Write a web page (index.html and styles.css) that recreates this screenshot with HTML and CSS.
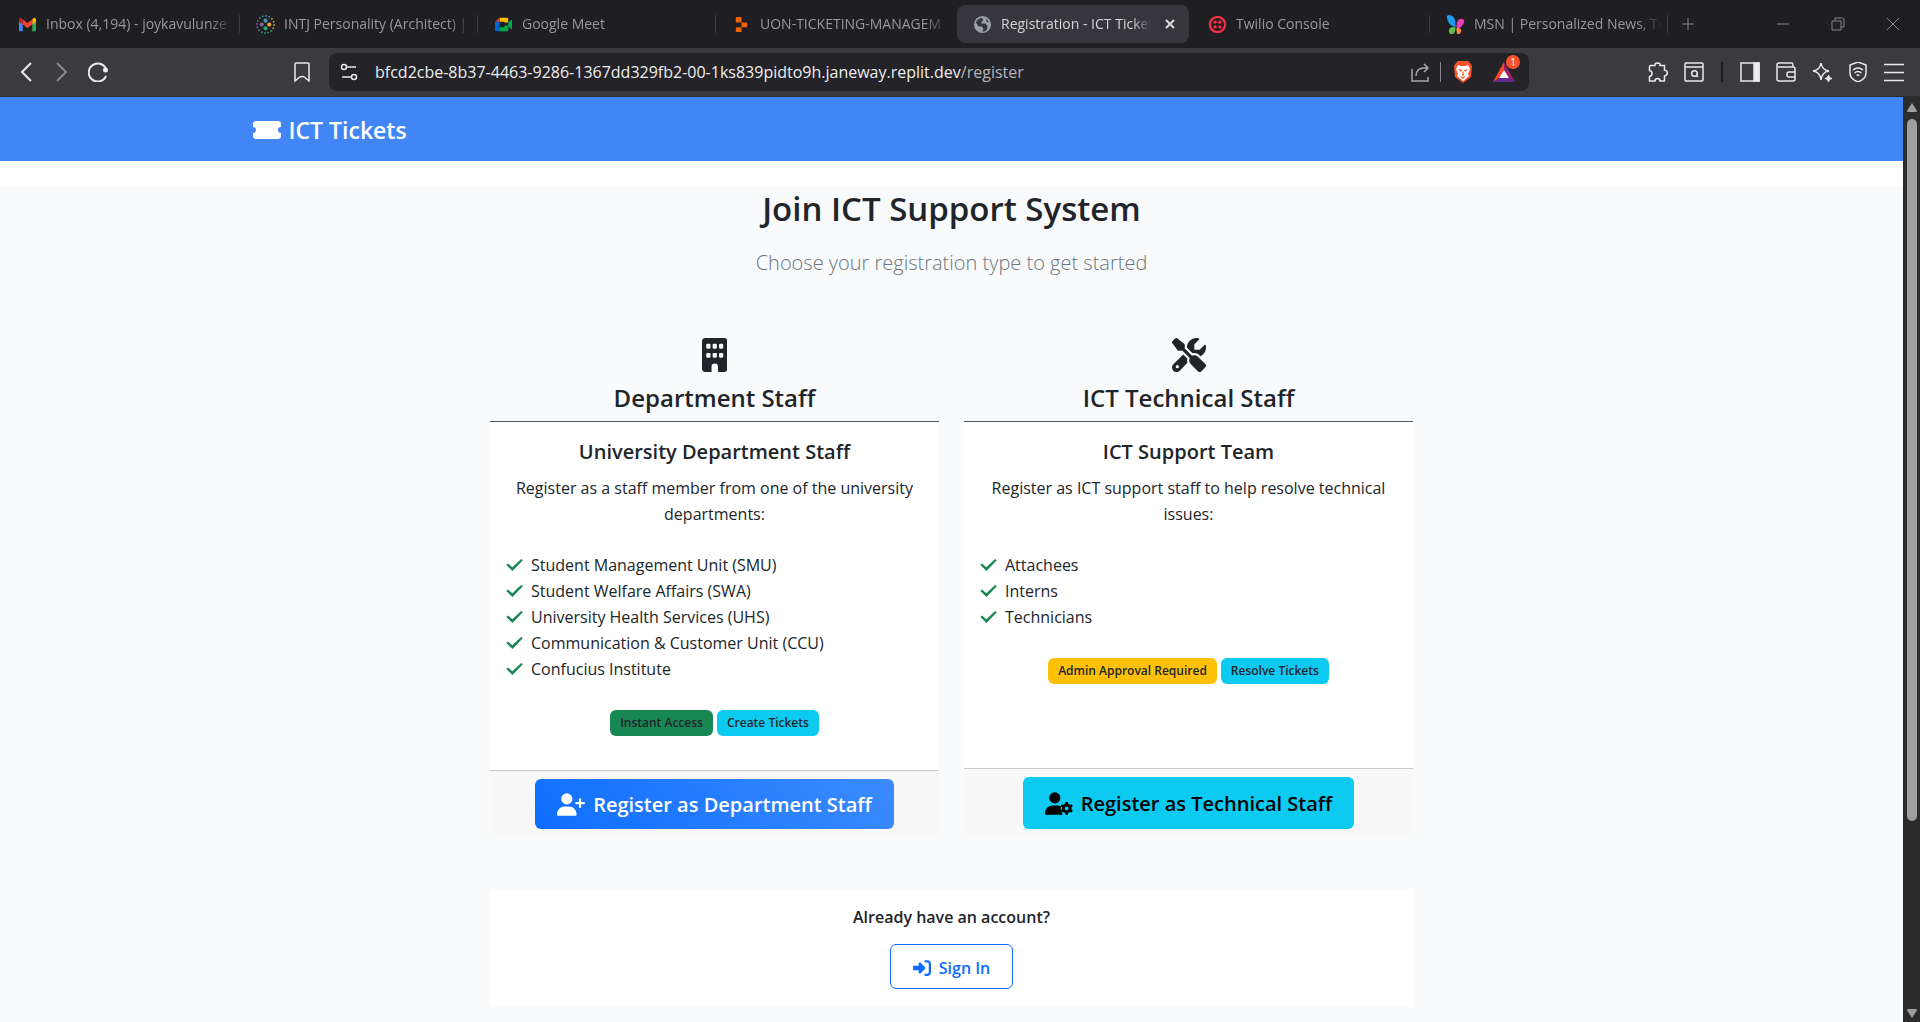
FILE: index.html
```html
<!DOCTYPE html>
<html lang="en">
<head>
<meta charset="utf-8">
<title>Registration - ICT Tickets</title>
<link rel="stylesheet" href="styles.css">
</head>
<body>
<header class="browser">
  <nav class="tabs" aria-label="Browser tabs">
    <a class="tab" href="#"><svg class="fav" viewBox="0 0 20 20"><path fill="#4285f4" d="M1 5v11q0 1 1 1h3V9z"/><path fill="#34a853" d="M19 5v11q0 1-1 1h-3V9z"/><path fill="#c5221f" d="M1 5q0-2 2-2l2 1.500V10L1 7z"/><path fill="#fbbc04" d="M19 5q0-2-2-2l-2 1.500V10l4-3z"/><path fill="#ea4335" d="M5 4.500l5 4 5-4V10l-5 4-5-4z"/></svg><span class="tab-text">Inbox (4,194) - joykavulunze</span></a>
    <a class="tab" href="#"><svg class="fav" viewBox="0 0 20 20"><g fill="none" stroke-width="1.600"><path stroke="#4298b4" stroke-dasharray="1.600 1.800" d="M3.600 3.600a9 9 0 0 1 12.800 0"/><path stroke="#e4ae3a" stroke-dasharray="1.600 1.800" d="M16.400 3.600a9 9 0 0 1 0 12.800"/><path stroke="#33a474" stroke-dasharray="1.600 1.800" d="M16.400 16.400a9 9 0 0 1-12.800 0"/><path stroke="#88619a" stroke-dasharray="1.600 1.800" d="M3.600 16.400a9 9 0 0 1 0-12.800"/></g><circle cx="10" cy="6" r="2.200" fill="#4298b4"/><circle cx="14" cy="10" r="2.200" fill="#e4ae3a"/><circle cx="10" cy="14" r="2.200" fill="#33a474"/><circle cx="6" cy="10" r="2.200" fill="#88619a"/></svg><span class="tab-text">INTJ Personality (Architect) |</span></a>
    <a class="tab" href="#"><svg class="fav" viewBox="0 0 20 20"><path fill="#ffba00" d="M6 3h8q1 0 1 1v4h-4V7H6z"/><path fill="#ea4335" d="M6 3v4H1z"/><path fill="#0066da" d="M1 7h5v6H1z"/><path fill="#0066da" d="M1 13h5v4H2q-1 0-1-1z"/><path fill="#00ac47" d="M6 13h5v-2h4v5q0 1-1 1H6zM15 8l3.500-3q.5 0 .5 1v9q0 1-.5 0L15 12z"/></svg><span class="tab-text">Google Meet</span></a>
    <a class="tab" href="#"><svg class="fav" viewBox="0 0 20 20"><path fill="#f26207" d="M4 3q0-1 1-1h5v6H5q-1 0-1-1zM10 8h5q1 0 1 1v3q0 1-1 1h-5zM4 14q0-1 1-1h5v4q0 1-1 1H5q-1 0-1-1z"/></svg><span class="tab-text">UON-TICKETING-MANAGEM</span></a>
    <a class="tab active" href="#"><svg class="fav" viewBox="0 0 20 20"><circle cx="10" cy="10" r="9" fill="#9aa0a6"/><path fill="#37363c" d="M3 8q2-4 6-5l2 2-2 2v2h4l2 2q1 3-1 5-2 2-4 1l1-3-2-2H6zM14 4l3 4-3-1z"/></svg><span class="tab-text">Registration - ICT Ticket</span><svg class="close" viewBox="0 0 12 12"><path d="M2 2l8 8M10 2l-8 8"/></svg></a>
    <a class="tab" href="#"><svg class="fav" viewBox="0 0 20 20"><circle cx="10" cy="10" r="8" fill="none" stroke="#f22f46" stroke-width="2.500"/><g fill="#f22f46"><circle cx="7.500" cy="7.500" r="1.800"/><circle cx="12.500" cy="7.500" r="1.800"/><circle cx="7.500" cy="12.500" r="1.800"/><circle cx="12.500" cy="12.500" r="1.800"/></g></svg><span class="tab-text">Twilio Console</span></a>
    <a class="tab" href="#"><svg class="fav" viewBox="0 0 20 20"><path fill="#1b9cf0" d="M1 3q-1-3 3-3 6 1 6 10v3Q2 11 1 3z"/><path fill="#e93fb0" d="M11 12q0-8 5-8 4 0 3 4-1 4-7 7z"/><path fill="#5fbf4a" d="M9 13q-5-1-6 3 0 5 4 4 3-1 3-7z"/><path fill="#ff8a3c" d="M11 14q5-1 5 3-1 4-4 3-1-1-1-6z"/></svg><span class="tab-text">MSN | Personalized News, To</span></a>
    <button class="plus" aria-label="New tab"><svg viewBox="0 0 16 16"><path d="M8 2v12M2 8h12"/></svg></button>
    <span class="window-buttons">
      <button aria-label="Minimize"><svg viewBox="0 0 16 16"><path d="M2 8h12"/></svg></button>
      <button aria-label="Restore"><svg viewBox="0 0 16 16"><path d="M2 5h9v9H2zM5 5V2h7q2 0 2 2v7h-3"/></svg></button>
      <button aria-label="Close"><svg viewBox="0 0 16 16"><path d="M2 2l12 12M14 2L2 14"/></svg></button>
    </span>
  </nav>
  <div class="toolbar">
    <div class="nav-buttons">
      <button aria-label="Back"><svg viewBox="0 0 20 20"><path d="M15 1L6 10l9 9"/></svg></button>
      <button class="dim" aria-label="Forward"><svg viewBox="0 0 20 20"><path d="M5 1l9 9-9 9"/></svg></button>
      <button aria-label="Reload"><svg viewBox="0 0 20 20"><path d="M18 14a9 9 0 1 1 0-7"/><circle cx="17.500" cy="8" r="2.500" fill="#eee" stroke="none"/></svg></button>
    </div>
    <button class="bookmark" aria-label="Bookmark"><svg viewBox="0 0 20 20"><path d="M3 2q0-1 1-1h12q1 0 1 1v17l-4-3.500q-3-2-6 0L3 19z"/></svg></button>
    <div class="address">
      <svg viewBox="0 0 20 20"><circle cx="5" cy="5" r="2.500"/><path d="M8 5h9M3 15h9"/><circle cx="15" cy="15" r="2.500"/></svg>
      <a class="url" href="#">bfcd2cbe-8b37-4463-9286-1367dd329fb2-00-1ks839pidto9h.janeway.replit.dev<span>/register</span></a>
      <svg class="share" viewBox="0 0 20 20"><path d="M2 7v12h16v-4M6 14q0-8 8-8h4M14 2l4 4-4 4"/></svg>
      <i class="bar"></i>
      <svg class="lion" viewBox="0 0 20 22"><path fill="#fb542b" stroke="none" d="M5 0h10l2 2 2 3-1 11-8 6-8-6L1 5l2-3z"/><path fill="#fff" stroke="none" d="M5 4l3 1h4l3-1 2 4-2 5 1 2-6 5-6-5 1-2-2-5z"/><path fill="#fb542b" stroke="none" d="M5 8l4 1-1 2zM15 8l-4 1 1 2zM10 9l1 5-1 1-1-1zM7 15l3 1 3-1-3 3z"/></svg>
      <span class="rewards"><svg viewBox="0 0 22 22"><path fill="#ff4724" stroke="none" d="M11 1L0 21l5-3 6-9z"/><path fill="#9e1f63" stroke="none" d="M11 1l11 20-6-4-5-8z"/><path fill="#662d91" stroke="none" d="M0 21l6-4h10l6 4z"/><path fill="#fff" stroke="none" d="M11 9l5 8H6z"/></svg><b>1</b></span>
    </div>
    <div class="tools">
      <svg viewBox="0 0 20 20"><path d="M2.500 3.500H7Q6.500 1 9.500 1t2.500 2.500h4.500V8q2.800.5 2.800 3t-2.800 3v5H12q0-2.500-2.500-2.500T7 19H1.500v-4.500q2.500-.5 2.500-3T1.500 8.500v-4q0-1 1-1z"/></svg>
      <svg viewBox="0 0 20 20"><rect x="1" y="1" width="18" height="18" rx="1"/><path d="M1 5h18M12 13l2 2"/><circle cx="10.500" cy="11.500" r="2.800"/></svg>
      <i class="bar dark"></i>
      <svg viewBox="0 0 20 20"><rect x="1" y="1" width="18" height="18"/><path fill="#eee" d="M14 1h5v18h-5z"/></svg>
      <svg viewBox="0 0 20 20"><path d="M19 7v10q0 2-2 2H3q-2 0-2-2V3q0-2 2-2h13q1 0 1 4H2M17 5q2 0 2 2M19 10h-6q-2 0-2 2v1q0 2 2 2h6z"/></svg>
      <svg viewBox="0 0 20 20"><path d="M9 1q1 7 8 8-7 1-8 9-1-8-8-9 7-1 8-8z"/><path fill="#eee" stroke-width="1" d="M16.500 13l1 2.500 2.500 1-2.500 1-1 2.500-1-2.500-2.500-1 2.500-1z"/></svg>
      <svg viewBox="0 0 20 20"><path d="M10 0l8 3v8q0 6-8 9-8-3-8-9V3zM5 8q5-4 10 0M6.500 11q3.500-3 7 0M8.500 13.500q1.500-1 3 0"/></svg>
      <svg viewBox="0 0 20 20"><path d="M0 2.500h20M0 10.500h20M0 18.500h20"/></svg>
    </div>
  </div>
</header>
<div class="viewport">
  <div class="page">
    <div class="navbar"><a class="brand" href="#"><svg viewBox="0 0 28 20"><path fill="#fff" d="M3 1h22q3 0 3 3v3a3 3 0 0 0 0 6v3q0 3-3 3H3q-3 0-3-3v-3a3 3 0 0 0 0-6V4q0-3 3-3z"/></svg>ICT Tickets</a></div>
    <main class="content">
      <h1>Join ICT Support System</h1>
      <p class="lead">Choose your registration type to get started</p>
      <div class="cards">
        <section class="card">
          <div class="card-head">
            <svg viewBox="0 0 384 512"><path fill="#212529" fill-rule="evenodd" d="M48 0C21 0 0 21 0 48v416c0 26 21 48 48 48h96v-80a48 48 0 0 1 96 0v80h96c27 0 48-22 48-48V48c0-27-21-48-48-48zM64 104q0-16 16-16h32q16 0 16 16v40q0 16-16 16H80q-16 0-16-16zm96 0q0-16 16-16h32q16 0 16 16v40q0 16-16 16h-32q-16 0-16-16zm96 0q0-16 16-16h32q16 0 16 16v40q0 16-16 16h-32q-16 0-16-16zM64 240q0-16 16-16h32q16 0 16 16v40q0 16-16 16H80q-16 0-16-16zm96 0q0-16 16-16h32q16 0 16 16v40q0 16-16 16h-32q-16 0-16-16zm96 0q0-16 16-16h32q16 0 16 16v40q0 16-16 16h-32q-16 0-16-16z"/></svg>
            <h2>Department Staff</h2>
          </div>
          <div class="card-body">
            <h3>University Department Staff</h3>
            <p>Register as a staff member from one of the university departments:</p>
            <ul>
              <li>Student Management Unit (SMU)</li>
              <li>Student Welfare Affairs (SWA)</li>
              <li>University Health Services (UHS)</li>
              <li>Communication &amp; Customer Unit (CCU)</li>
              <li>Confucius Institute</li>
            </ul>
            <div class="badges"><span class="badge green">Instant Access</span><span class="badge cyan">Create Tickets</span></div>
          </div>
          <div class="card-foot"><button class="btn primary"><svg viewBox="0 0 640 512"><path fill="currentColor" d="M96 128a128 128 0 1 1 256 0 128 128 0 1 1-256 0zM0 482c0-98 80-178 178-178h92c98 0 178 80 178 178 0 17-13 30-30 30H30c-17 0-30-13-30-30zM504 312v-64h-64a24 24 0 0 1 0-48h64v-64a24 24 0 0 1 48 0v64h64a24 24 0 0 1 0 48h-64v64a24 24 0 0 1-48 0z"/></svg>Register as Department Staff</button></div>
        </section>
        <section class="card">
          <div class="card-head">
            <svg viewBox="0 0 512 512"><path fill="#212529" fill-rule="evenodd" d="M78.600 5C69.100-2.400 55.600-1.500 47 7L7 47c-8.500 8.500-9.400 22-2.100 31.600l80 104c4.500 5.900 11.600 9.400 19 9.400h54.100l109 109c-14.700 29-10 65.400 14.300 89.600l112 112c12.500 12.500 32.800 12.500 45.300 0l64-64c12.500-12.500 12.500-32.800 0-45.300l-112-112c-24.200-24.200-60.600-29-89.600-14.300l-109-109V104c0-7.500-3.500-14.500-9.400-19L78.600 5zM19.900 396.100C7.200 408.800 0 426.100 0 444.100 0 481.600 30.400 512 67.900 512c18 0 35.300-7.200 48-19.900l117.800-117.800c-7.800-20.900-9-43.600-3.600-65.100l-61.700-61.700L19.900 396.100zM512 144c0-10.500-1.100-20.700-3.200-30.500-2.400-11.200-16.100-14.100-24.200-6l-63.900 63.900c-3 3-7.100 4.700-11.300 4.700H352c-8.800 0-16-7.200-16-16V102.600c0-4.200 1.700-8.300 4.700-11.300l63.900-63.900c8.100-8.100 5.200-21.800-6-24.200C388.700 1.100 378.500 0 368 0 288.500 0 224 64.500 224 144v.8l85.300 85.300c36-9.100 75.800.5 104 28.700L429 274.500c49-23 83-72.800 83-130.500zM56 432a24 24 0 1 1 48 0 24 24 0 1 1-48 0z"/></svg>
            <h2>ICT Technical Staff</h2>
          </div>
          <div class="card-body">
            <h3>ICT Support Team</h3>
            <p>Register as ICT support staff to help resolve technical issues:</p>
            <ul>
              <li>Attachees</li>
              <li>Interns</li>
              <li>Technicians</li>
            </ul>
            <div class="badges"><span class="badge yellow">Admin Approval Required</span><span class="badge cyan">Resolve Tickets</span></div>
          </div>
          <div class="card-foot"><button class="btn info"><svg viewBox="0 0 640 512"><path fill="currentColor" d="M96 128a128 128 0 1 1 256 0 128 128 0 1 1-256 0zM0 482c0-98 80-178 178-178h92c35 0 68 10 96 28-12 50-10 110 40 180H30c-17 0-30-13-30-30z"/><g transform="translate(496 368)"><circle r="78" fill="none" stroke="currentColor" stroke-width="68"/><path stroke="currentColor" stroke-width="58" d="M0-144v50M0 94v50M-125-72l43 25M82 47l43 25M125-72l-43 25M-82 47l-43 25"/></g></svg>Register as Technical Staff</button></div>
        </section>
      </div>
      <section class="signin">
        <h4>Already have an account?</h4>
        <a class="signin-btn" href="#"><svg viewBox="0 0 512 512"><path fill="currentColor" d="M217.900 105.900L340.700 228.700c7.200 7.200 11.300 17.100 11.300 27.300s-4.100 20.100-11.300 27.300L217.900 406.100c-6.400 6.400-15 9.900-24 9.900-18.700 0-33.900-15.200-33.900-33.900V320H32c-17.700 0-32-14.300-32-32v-64c0-17.700 14.300-32 32-32h128v-62.100c0-18.700 15.200-33.900 33.900-33.900 9 0 17.600 3.600 24 9.900zM352 416h64c17.700 0 32-14.300 32-32V128c0-17.700-14.300-32-32-32h-64c-17.700 0-32-14.300-32-32s14.300-32 32-32h64c53 0 96 43 96 96v256c0 53-43 96-96 96h-64c-17.700 0-32-14.300-32-32s14.300-32 32-32z"/></svg>Sign In</a>
      </section>
    </main>
  </div>
  <div class="scrollbar"><svg viewBox="0 0 12 10"><path fill="#9f9f9f" d="M6 0l5 8q0 1-1 1H2Q1 9 1 8z"/></svg><i></i><svg viewBox="0 0 12 10"><path fill="#9f9f9f" d="M6 10l5-8q0-1-1-1H2Q1 1 1 2z"/></svg></div>
</div>
</body>
</html>
```
FILE: styles.css
```css
* { box-sizing: border-box; }
body {
  margin: 0;
  height: 100vh;
  display: flex;
  flex-direction: column;
  overflow: hidden;
  font-family: "Open Sans", "Noto Sans", sans-serif;
  font-size: 16px;
  line-height: 26px;
  color: #212529;
}
h1, h2, h3, h4, p, ul { margin: 0; padding: 0; font-weight: 600; }
p, ul { font-weight: 400; }
a { color: inherit; text-decoration: none; }
button { font: inherit; color: inherit; border: 0; padding: 0; background: none; }
svg { display: block; flex: none; }

/* Browser frame */
.browser { flex: none; }
.browser svg { fill: none; stroke-width: 2; }
.tabs { height: 48px; padding-left: 2px; display: flex; align-items: center; background: #1f1e23; color: #98989c; font-size: 14px; }
.tab { flex: 0 1 238px; min-width: 0; height: 38px; display: flex; align-items: center; gap: 9px; padding: 0 2px 0 16px; position: relative; }
.tab::after { content: ""; position: absolute; right: 0; top: 10px; width: 1px; height: 18px; background: #3d3c42; }
.tab.active { background: #37363c; border-radius: 8px; color: #d4d4d6; flex-basis: 232px; margin: 0 3px; padding-right: 13px; }
.tab.active::after, .tab:has(+ .active)::after { display: none; }
.fav { width: 19px; height: 19px; }
.tab-text { flex: 1; overflow: hidden; white-space: nowrap; mask-image: linear-gradient(to right, #000 85%, transparent 98%); }
.close { width: 12px; height: 12px; stroke: #ddd; }
.plus { margin-left: 12px; }
.tabs button svg { width: 16px; height: 16px; stroke: #85858a; stroke-width: 1; }
.window-buttons { margin-left: auto; display: flex; gap: 39px; padding-right: 19px; }
.toolbar { height: 49px; display: flex; align-items: center; background: #3b3a3f; border-bottom: 1px solid #2c2b30; }
.toolbar svg { width: 20px; height: 20px; stroke: #e9e9ea; stroke-width: 1.5; }
.nav-buttons { display: flex; gap: 16px; padding-left: 16px; }
.nav-buttons svg { stroke-width: 2; }
.dim { opacity: .45; }
.bookmark { margin-left: 184px; }
.address { flex: 1; height: 38px; margin-left: 17px; padding: 0 10px 0 10px; display: flex; align-items: center; gap: 10px; background: #242328; border-radius: 8px; }
.url { flex: 1; color: #ededee; margin-left: 6px; white-space: nowrap; }
.url span { color: #b5b5b8; }
.toolbar .share { stroke: #a8a8ab; }
.bar { width: 1px; height: 20px; background: #88888c; }
.dark { background: #1f1e23; width: 2px; margin: 0 1px; }
.toolbar .lion { height: 22px; margin: 0 10px 0 2px; }
.rewards { position: relative; width: 26px; }
.toolbar .rewards svg { width: 22px; height: 22px; }
.rewards b { position: absolute; left: 13px; top: -6px; width: 14px; height: 14px; border-radius: 7px; background: #fb542b; color: #fff; font-size: 10px; line-height: 14px; text-align: center; font-weight: 400; }
.tools { display: flex; align-items: center; gap: 16px; padding: 0 16px 0 119px; }

/* Web page */
.viewport { flex: 1; min-height: 0; display: flex; }
.page { flex: 1; display: flex; flex-direction: column; }
.navbar { flex: none; height: 64px; display: flex; align-items: center; background: #4285f6; padding: 2px calc(50% - 699px) 0; }
.brand { display: flex; align-items: center; gap: 8px; color: #fff; font-size: 23px; font-weight: 600; }
.brand svg { width: 28px; height: 20px; }
.content { flex: 1; margin-top: 26px; background: #f8fafc; display: flex; flex-direction: column; align-items: center; text-align: center; }
h1 { font-size: 33px; line-height: 44px; }
.lead { font-size: 20px; line-height: 32px; font-weight: 300; color: #6c757d; margin-top: 16px; }
.cards { width: 923px; max-width: 100%; margin-top: 48px; display: grid; grid-template-columns: 1fr 1fr; gap: 25px; }
.card { display: flex; flex-direction: column; }
.card-head { height: 95px; border-bottom: 1px solid #4b5563; display: flex; flex-direction: column; align-items: center; padding-top: 11px; }
.card-head svg { height: 34px; }
.card-head h2 { font-size: 24px; line-height: 32px; margin-top: 10px; }
.card-body { flex: 1; background: #fff; padding: 16px 16px 34px; }
h3 { font-size: 20px; line-height: 28px; margin-bottom: 9px; }
ul { list-style: none; text-align: left; margin: 25px 0 28px; }
li { display: flex; align-items: center; gap: 8px; }
li::before { content: ""; width: 17px; height: 12px; background: #198754; clip-path: polygon(2% 50%, 12% 38%, 37% 68%, 89% 0, 99% 10%, 38% 100%); }
.badges { display: flex; justify-content: center; gap: 4px; }
.badge { font-size: 12px; line-height: 18px; font-weight: 600; padding: 4px 10px; border-radius: 6px; }
.green { background: #198754; }
.cyan { background: #0dcaf0; }
.yellow { background: #ffc107; }
.card-foot { background: #f8f8f8; border-top: 1px solid #c8c8c8; border-radius: 0 0 6px 6px; padding: 8px; display: flex; justify-content: center; }
.btn { height: 50px; padding: 2px 22px 0; display: flex; align-items: center; gap: 8px; border-radius: 6px; font-size: 20px; font-weight: 600; }
.btn svg { width: 28px; height: 23px; margin-bottom: 2px; }
.primary { color: #fff; background: linear-gradient(45deg, #0d6efd, #3d8bfd); }
.info { color: #000; height: 52px; background: #0dcaf0; }
.signin { width: 923px; max-width: 100%; margin-top: 52px; background: #fff; padding: 14px 0 18px; display: flex; flex-direction: column; align-items: center; }
h4 { font-size: 16px; line-height: 28px; }
.signin-btn { height: 45px; margin-top: 13px; padding: 2px 22px 0; display: flex; align-items: center; gap: 8px; border: 1px solid #0d6efd; border-radius: 6px; color: #0d6efd; font-weight: 600; }
.signin-btn svg { width: 18px; height: 18px; }
.scrollbar { width: 17px; background: #2c2c2c; display: flex; flex-direction: column; align-items: center; padding: 6px 0 4px; }
.scrollbar svg { width: 12px; height: 10px; }
.scrollbar i { width: 10px; height: 702px; margin: 6px 0 auto; border-radius: 5px; background: #9f9f9f; }
```
